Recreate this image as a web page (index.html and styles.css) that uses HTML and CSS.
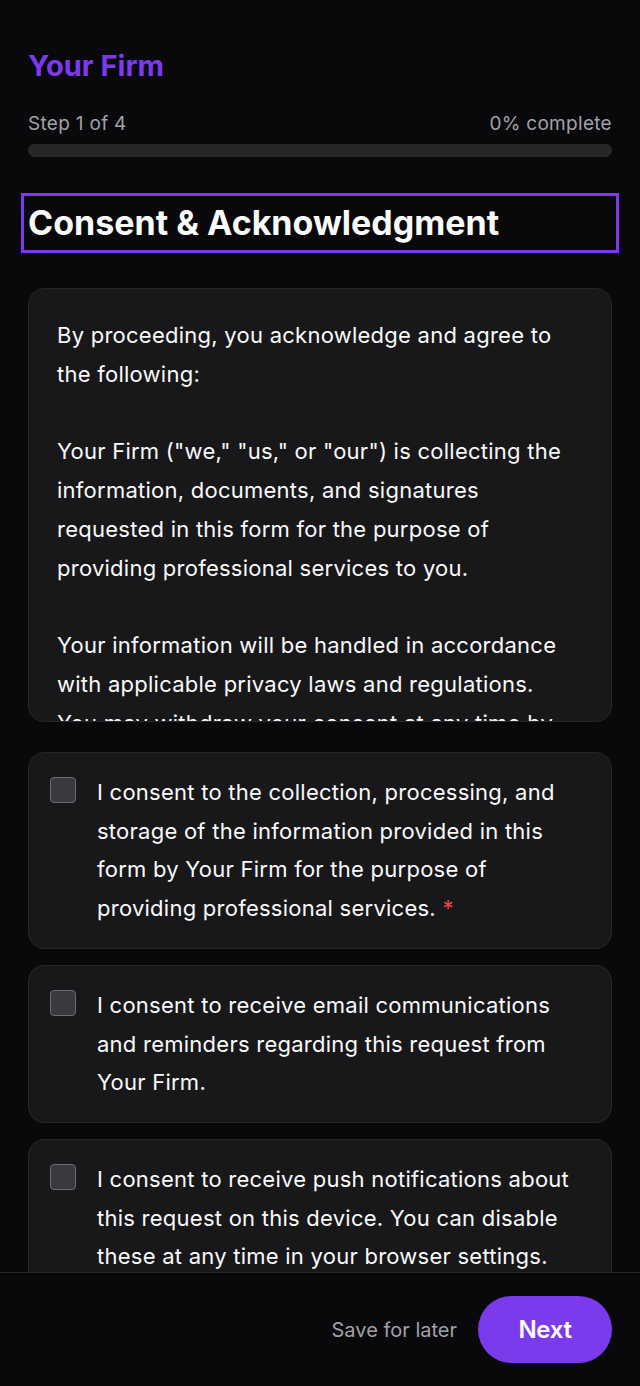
FILE: index.html
```html
<!DOCTYPE html>
<html lang="en">
<head>
<meta charset="utf-8">
<title>Consent &amp; Acknowledgment</title>
<link rel="stylesheet" href="styles.css">
</head>
<body>
<div class="app">
  <main class="main">
    <div class="brand">Your Firm</div>
    <div class="progress-meta">
      <span>Step 1 of 4</span>
      <span>0% complete</span>
    </div>
    <div class="progress-track"><div class="progress-fill" style="width:0%"></div></div>

    <h1 class="title" tabindex="-1">Consent &amp; Acknowledgment</h1>

    <div class="terms">
      <p>By proceeding, you acknowledge and agree to the following:</p>
      <p>Your Firm ("we," "us," or "our") is collecting the information, documents, and signatures requested in this form for the purpose of providing professional services to you.</p>
      <p>Your information will be handled in accordance with applicable privacy laws and regulations. You may withdraw your consent at any time by contacting us directly.</p>
    </div>

    <label class="consent">
      <span class="box"></span>
      <span class="consent-text">I consent to the collection, processing, and storage of the information provided in this form by Your Firm for the purpose of providing professional services. <span class="req">*</span></span>
    </label>

    <label class="consent">
      <span class="box"></span>
      <span class="consent-text">I consent to receive email communications and reminders regarding this request from Your Firm.</span>
    </label>

    <label class="consent">
      <span class="box"></span>
      <span class="consent-text">I consent to receive push notifications about this request on this device. You can disable these at any time in your browser settings.</span>
    </label>
  </main>
  <footer class="footer">
    <button class="save" type="button">Save for later</button>
    <button class="next" type="button">Next</button>
  </footer>
</div>
</body>
</html>
```
FILE: styles.css
```css
* { box-sizing: border-box; }
html, body { margin: 0; padding: 0; background: #09090b; }
body {
  font-family: Inter, "Noto Sans", sans-serif;
  color: #fafafa;
}
.app {
  height: 1386px;
  display: flex;
  flex-direction: column;
}
.main {
  flex: 1;
  overflow: hidden;
  padding: 48px 28px 0;
  display: flex;
  flex-direction: column;
}
.brand {
  font-size: 29px;
  font-weight: 700;
  line-height: 36px;
  color: #7c3aed;
}
.progress-meta {
  margin-top: 26px;
  display: flex;
  justify-content: space-between;
  font-size: 19px;
  line-height: 28px;
  color: #a1a1aa;
  letter-spacing: 0.3px;
}
.progress-track {
  margin-top: 6px;
  height: 13px;
  border-radius: 7px;
  background: #27272a;
  overflow: hidden;
  flex-shrink: 0;
}
.progress-fill { height: 100%; background: #7c3aed; }
.title {
  margin: 43px 0 0;
  font-size: 34px;
  font-weight: 700;
  line-height: 46px;
  outline: 3px solid #7c3aed;
  outline-offset: 4px;
}
.terms {
  margin-top: 42px;
  height: 434px;
  flex-shrink: 0;
  overflow: hidden;
  background: #18181b;
  border: 1px solid #27272a;
  border-radius: 16px;
  padding: 27px 40px 27px 28px;
  font-size: 22px;
  line-height: 38.8px;
  letter-spacing: 0.25px;
}
.terms p { margin: 0 0 38.8px; }
.consent {
  margin-top: 16px;
  flex-shrink: 0;
  display: flex;
  gap: 21px;
  align-items: flex-start;
  background: #18181b;
  border: 1px solid #27272a;
  border-radius: 16px;
  padding: 20px 20px 20px 21px;
  font-size: 22px;
  line-height: 38.7px;
  letter-spacing: 0.25px;
}
.terms + .consent { margin-top: 30px; }
.box {
  flex-shrink: 0;
  width: 26px;
  height: 26px;
  margin-top: 4px;
  border-radius: 4px;
  background: #3a3a3d;
  border: 1.5px solid #6b6b72;
}
.req { color: #ef4444; }
.footer {
  flex-shrink: 0;
  border-top: 1px solid #27272a;
  background: #09090b;
  padding: 23px 28px;
  display: flex;
  justify-content: flex-end;
  align-items: center;
  gap: 21px;
}
.save {
  background: none;
  border: none;
  padding: 0;
  font-family: inherit;
  font-size: 20px;
  color: #a1a1aa;
}
.next {
  width: 134px;
  height: 67px;
  border: none;
  border-radius: 34px;
  background: #7c3aed;
  color: #fff;
  font-family: inherit;
  font-size: 24px;
  font-weight: 600;
  letter-spacing: -0.3px;
}
```
